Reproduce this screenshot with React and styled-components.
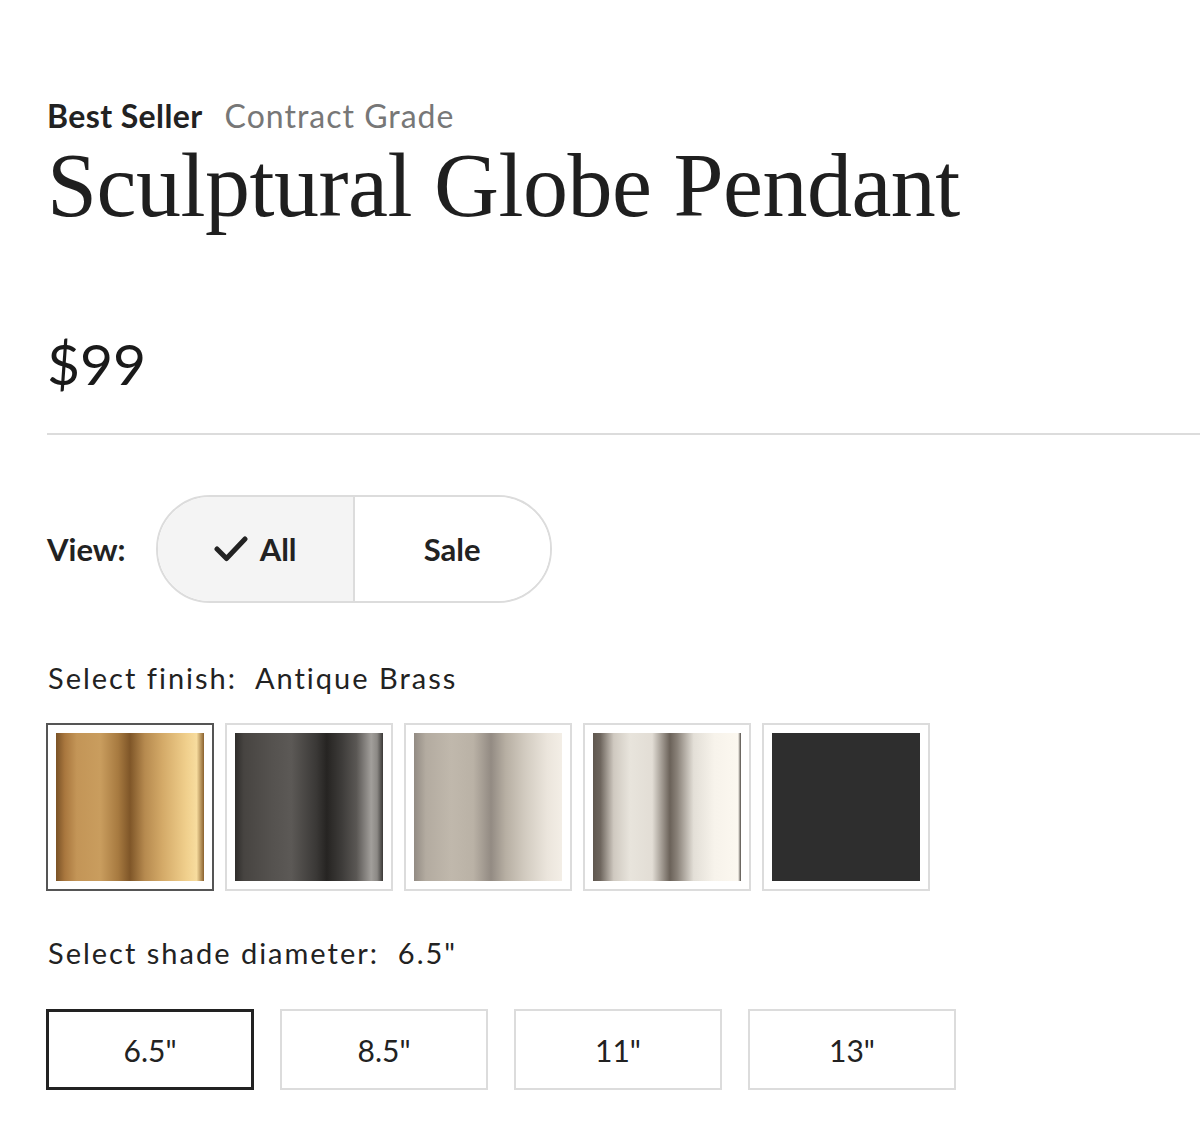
import React from 'react';
import styled, { createGlobalStyle } from 'styled-components';

const GlobalStyle = createGlobalStyle`
  html, body {
    margin: 0;
    padding: 0;
    background: #fff;
    overflow-x: hidden;
  }
  body {
    font-family: Lato, "Open Sans", sans-serif;
    color: #222;
  }
`;

const Page = styled.div`
  padding: 96px 0 0 47px;
  width: 1153px;
`;

const Badges = styled.div`
  display: flex;
  gap: 22px;
  font-size: 32px;
  line-height: 40px;
  letter-spacing: 0.6px;
`;

const Badge = styled.span`
  font-weight: ${p => (p.strong ? 700 : 400)};
  color: ${p => (p.strong ? '#222' : '#777')};
  letter-spacing: ${p => (p.strong ? '0.4px' : '1px')};
`;

const Title = styled.h1`
  margin: 0;
  font-family: "Liberation Serif", "DejaVu Serif", serif;
  font-weight: 400;
  font-size: 90px;
  line-height: 100px;
  letter-spacing: -0.5px;
  color: #1f1f1f;
`;

const Price = styled.div`
  margin-top: 92px;
  font-size: 57px;
  line-height: 70px;
  color: #1a1a1a;
`;

const Divider = styled.hr`
  margin: 35px 0 0;
  border: none;
  border-top: 2px solid #dcdcdc;
`;

const ViewRow = styled.div`
  display: flex;
  align-items: center;
  gap: 30px;
  margin-top: 60px;
`;

const ViewLabel = styled.span`
  font-size: 31px;
  font-weight: 700;
`;

const Toggle = styled.div`
  display: flex;
  width: 396px;
  height: 108px;
  box-sizing: border-box;
  border: 2px solid #dcdcdc;
  border-radius: 54px;
  overflow: hidden;
`;

const ToggleOption = styled.div`
  flex: 1;
  display: flex;
  align-items: center;
  justify-content: center;
  gap: 12px;
  font-size: 31px;
  font-weight: 700;
  background: ${p => (p.active ? '#f4f4f4' : '#fff')};
  & + & {
    border-left: 2px solid #dcdcdc;
  }
`;

const Label = styled.div`
  font-size: 29px;
  letter-spacing: 2px;
  line-height: 40px;
  margin-top: ${p => p.top}px;
  padding-left: 1px;
`;

const SwatchRow = styled.div`
  display: flex;
  gap: 11px;
  margin-top: 25px;
  margin-left: -1px;
`;

const Swatch = styled.div`
  width: 168px;
  height: 168px;
  box-sizing: border-box;
  padding: 8px;
  border: 2px solid ${p => (p.selected ? '#555' : '#dcdcdc')};
`;

const SwatchFill = styled.div`
  width: 100%;
  height: 100%;
  background: ${p => p.fill};
`;

const SizeRow = styled.div`
  display: flex;
  gap: 26px;
  margin-top: 36px;
  margin-left: -1px;
`;

const SizeButton = styled.div`
  width: 208px;
  height: 81px;
  box-sizing: border-box;
  display: flex;
  align-items: center;
  justify-content: center;
  font-size: 30px;
  border: ${p => (p.selected ? '3px solid #222' : '2px solid #dcdcdc')};
`;

const finishes = [
  'linear-gradient(90deg, #7a5226 0%, #a9773e 6%, #c39557 14%, #c99d5e 30%, #a77a40 42%, #7f5628 50%, #b68a4f 60%, #d4aa68 72%, #f0cf8c 88%, #f7dc9e 95%, #8a612e 100%)',
  'linear-gradient(90deg, #2f2d2b 0%, #474441 6%, #55524f 25%, #5c5956 38%, #3a3836 55%, #262422 62%, #3d3b39 72%, #5a5754 82%, #a29f9b 92%, #8c8985 96%, #3a3836 100%)',
  'linear-gradient(90deg, #928b83 0%, #b3aba0 8%, #c0b8ac 25%, #bab2a6 40%, #938b83 52%, #b7afa3 62%, #d2cbc0 75%, #ebe5dc 90%, #f3eee6 100%)',
  'linear-gradient(90deg, #5f574f 0%, #6e665e 5%, #cfc9c0 14%, #e8e4dc 25%, #e2ddd5 40%, #6b6259 52%, #8a8279 57%, #e3dfd7 68%, #f7f3eb 82%, #fcf8f0 98%, #4f4a45 100%)',
  '#2e2e2e',
];

const sizes = ['6.5"', '8.5"', '11"', '13"'];

const Check = () => (
  <svg width="34" height="28" viewBox="0 0 34 28" fill="none">
    <path d="M3 14 L12.5 23.5 L31 4" stroke="#222" strokeWidth="5" strokeLinecap="round" strokeLinejoin="round" />
  </svg>
);

export default function App() {
  return (
    <>
      <GlobalStyle />
      <Page>
        <Badges>
          <Badge strong>Best Seller</Badge>
          <Badge>Contract Grade</Badge>
        </Badges>
        <Title>Sculptural Globe Pendant</Title>
        <Price>$99</Price>
        <Divider />
        <ViewRow>
          <ViewLabel>View:</ViewLabel>
          <Toggle>
            <ToggleOption active>
              <Check />
              All
            </ToggleOption>
            <ToggleOption>Sale</ToggleOption>
          </Toggle>
        </ViewRow>
        <Label top={55}>Select finish:&nbsp; Antique Brass</Label>
        <SwatchRow>
          {finishes.map((f, i) => (
            <Swatch key={i} selected={i === 0}>
              <SwatchFill fill={f} />
            </Swatch>
          ))}
        </SwatchRow>
        <Label top={42}>Select shade diameter:&nbsp; 6.5"</Label>
        <SizeRow>
          {sizes.map((s, i) => (
            <SizeButton key={s} selected={i === 0}>{s}</SizeButton>
          ))}
        </SizeRow>
      </Page>
    </>
  );
}
